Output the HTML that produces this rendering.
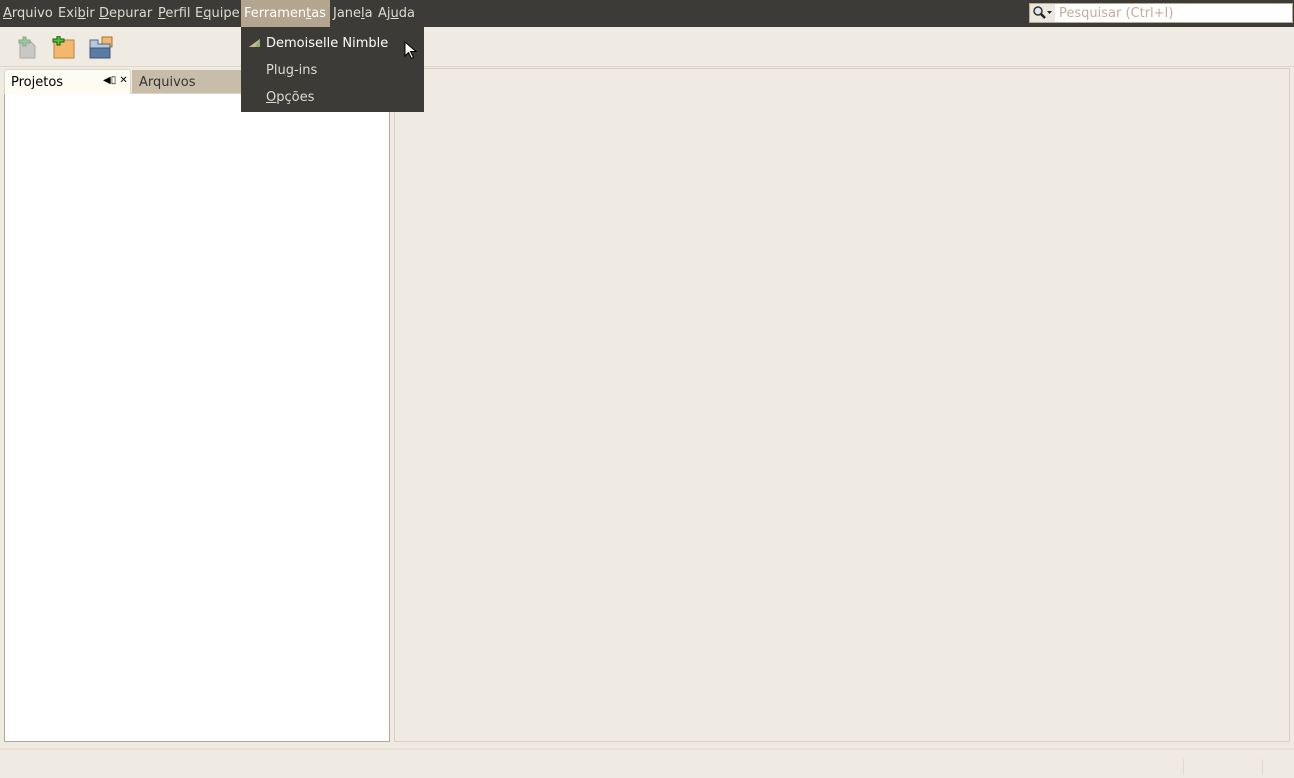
<!DOCTYPE html>
<html><head><style>
*{margin:0;padding:0;box-sizing:border-box}
body{width:1294px;height:778px;background:#efebe3;font-family:"DejaVu Sans","Liberation Sans",sans-serif;font-size:13px;position:relative;overflow:hidden}
.a{position:absolute}
#mb{left:0;top:0;width:1294px;height:27px;background:#3c3b37;color:#dfdbd2}
#mb span{position:absolute;top:6px;white-space:nowrap}
u{text-decoration:underline}
</style></head><body>
<div id="mb" class="a">
<span style="left:3px"><u>A</u>rquivo</span>
<span style="left:58px">Exi<u>b</u>ir</span>
<span style="left:99px"><u>D</u>epurar</span>
<span style="left:158px"><u>P</u>erfil</span>
<span style="left:195px">E<u>q</u>uipe</span>
<div class="a" style="left:241px;top:0;width:89px;height:27px;background:#b4a590"></div>
<span style="left:244px;color:#fff">Ferramen<u>t</u>as</span>
<span style="left:333px">Jane<u>l</u>a</span>
<span style="left:378px">Aj<u>u</u>da</span>
<div class="a" style="left:1029px;top:3px;width:264px;height:20px;background:#fff;border:1px solid #b7a98f"></div>
<div class="a" style="left:1030px;top:4px;width:25px;height:18px;background:#ece8df"></div>
<svg class="a" style="left:1032px;top:5px" width="22" height="16"><circle cx="6" cy="6" r="4" fill="#dde6f0" stroke="#333" stroke-width="1.5"/><path d="M9 9l4 4" stroke="#222" stroke-width="2.5"/><path d="M15 6h5l-2.5 3z" fill="#222"/></svg>
<span style="left:1059px;top:6px;color:#c7ab9a">Pesquisar (Ctrl+I)</span>
</div>
<svg class="a" style="left:15px;top:36px" width="24" height="24"><path d="M5 5h10l5 5v12H5z" fill="#c8c8c4" stroke="#aaa"/><path d="M4 4h4v-3h3v3h4v3h-4v3H8V7H4z" fill="#9cc79c" stroke="#8a8"/></svg>
<svg class="a" style="left:52px;top:36px" width="24" height="24"><rect x="2" y="4" width="20" height="18" fill="#f3b86c" stroke="#b5833e"/><path d="M1 3h4v-3h3v3h4v3H8v3H5V6H1z" fill="#4ec63a" stroke="#1a5a10"/></svg>
<svg class="a" style="left:89px;top:36px" width="24" height="24"><rect x="13" y="1" width="10" height="10" fill="#f3b86c" stroke="#a47438"/><path d="M1 4h8v4h12v14H1z" fill="#b7c9dc" stroke="#4f6684"/><path d="M1 12h20v10H1z" fill="#5a7ca3" stroke="#3c5574"/></svg>
<div class="a" style="left:0;top:66px;width:1294px;height:1px;background:#ddd6c9"></div>
<div class="a" style="left:4px;top:94px;width:386px;height:648px;background:#fff;border:1px solid #b2aa98;border-top:none"></div>
<div class="a" style="left:4px;top:69px;width:127px;height:25px;background:#fdfbf2;border:1px solid #ddd5c5;border-bottom:none;border-radius:3px 3px 0 0"></div>
<div class="a" style="left:11px;top:75px">Projetos</div>
<div class="a" style="left:103px;top:75px;font-size:10px">◀▯ ✕</div>
<div class="a" style="left:132px;top:70px;width:120px;height:24px;background:#c8bda9"></div>
<div class="a" style="left:139px;top:75px;color:#333">Arquivos</div>
<div class="a" style="left:131px;top:93px;width:259px;height:1px;background:#ddd5c5"></div>
<div class="a" style="left:394px;top:68px;width:896px;height:674px;border:1px solid #d6cfc2;background:#efebe3"></div>
<div class="a" style="left:0;top:748px;width:1294px;height:2px;background:#e6e0d2"></div>
<div class="a" style="left:1183px;top:759px;width:1px;height:16px;background:#e2dccf"></div>
<div class="a" style="left:1262px;top:759px;width:1px;height:16px;background:#e2dccf"></div>
<div class="a" style="left:241px;top:27px;width:183px;height:85px;background:#3c3b37;color:#dfdbd2">
<svg class="a" style="left:7px;top:11px" width="14" height="10"><path d="M1 9L12 1v8z" fill="#8fb07a"/><path d="M1 9L12 1L7 9z" fill="#c6bb88"/></svg>
<div class="a" style="left:25px;top:9px;color:#fff">Demoiselle Nimble</div>
<div class="a" style="left:25px;top:36px">Plu<u>g</u>-ins</div>
<div class="a" style="left:25px;top:63px"><u>O</u>pções</div>
<svg class="a" style="left:163px;top:14px" width="14" height="20"><path d="M1 1v14l3.5-3.5 3 6 2-1-3-6H12z" fill="#fff" stroke="#000"/></svg>
</div>
</body></html>
